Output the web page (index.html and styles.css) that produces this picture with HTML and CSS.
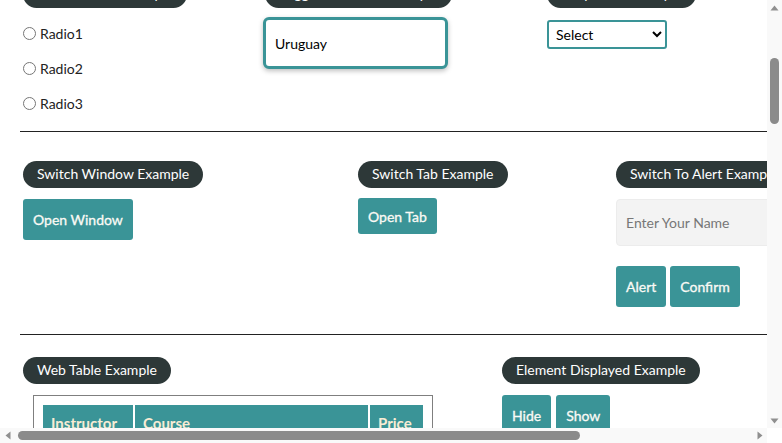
FILE: index.html
```html
<!DOCTYPE html>
<html>
<head>
    <meta charset="utf-8">
    <meta name="viewport" content="width=device-width, initial-scale=1">
    <title>Practice Page</title>
    <link rel="stylesheet" href="styles.css">
</head>
<body>
<div class="window">
    <div class="viewport">
        <div class="page">
            <header class="page-head">
                <h1>Practice Page</h1>
            </header>

            <div class="row row-one">
                <div class="block">
                    <h4 class="legend">Radio Button Example</h4>
                    <div class="radios">
                        <label class="radio"><input type="radio" name="radioButton" value="radio1">Radio1</label>
                        <label class="radio"><input type="radio" name="radioButton" value="radio2">Radio2</label>
                        <label class="radio"><input type="radio" name="radioButton" value="radio3">Radio3</label>
                    </div>
                </div>
                <div class="block">
                    <h4 class="legend legend-shift">Suggession Class Example</h4>
                    <input class="suggest" type="text" value="Uruguay">
                </div>
                <div class="block">
                    <h4 class="legend">Dropdown Example</h4>
                    <select class="dropdown">
                        <option>Select</option>
                        <option>Option1</option>
                        <option>Option2</option>
                        <option>Option3</option>
                    </select>
                </div>
                <div class="block">
                    <h4 class="legend">Checkbox Example</h4>
                    <div class="radios">
                        <label class="radio"><input type="checkbox">Option1</label>
                        <label class="radio"><input type="checkbox">Option2</label>
                        <label class="radio"><input type="checkbox">Option3</label>
                    </div>
                </div>
            </div>

            <hr class="divider">

            <div class="row row-two">
                <div class="block">
                    <h4 class="legend">Switch Window Example</h4>
                    <button class="btn btn-tall">Open Window</button>
                </div>
                <div class="block">
                    <h4 class="legend">Switch Tab Example</h4>
                    <a class="btn btn-link">Open Tab</a>
                </div>
                <div class="block">
                    <h4 class="legend">Switch To Alert Example</h4>
                    <input class="name-input" type="text" placeholder="Enter Your Name">
                    <div class="btn-row">
                        <button class="btn btn-tall">Alert</button>
                        <button class="btn btn-tall">Confirm</button>
                    </div>
                </div>
            </div>

            <hr class="divider">

            <div class="row row-three">
                <div class="block">
                    <h4 class="legend">Web Table Example</h4>
                    <div class="table-frame">
                        <table class="courses">
                            <thead>
                                <tr>
                                    <th class="col-inst">Instructor</th>
                                    <th>Course</th>
                                    <th class="col-price">Price</th>
                                </tr>
                            </thead>
                            <tbody>
                                <tr><td>Rahul Shetty</td><td>Selenium Webdriver with Java Basics + Advanced + Interview Guide</td><td>30</td></tr>
                                <tr><td>Rahul Shetty</td><td>Learn SQL in Practical + Database Testing from Scratch</td><td>25</td></tr>
                                <tr><td>Rahul Shetty</td><td>Appium (Selenium) - Mobile Automation Testing from Scratch</td><td>30</td></tr>
                                <tr><td>Rahul Shetty</td><td>WebSecurity Testing for Beginners-QA knowledge to next level</td><td>20</td></tr>
                                <tr><td>Rahul Shetty</td><td>Learn JMETER from Scratch - (Performance + Load) Testing Tool</td><td>25</td></tr>
                                <tr><td>Rahul Shetty</td><td>WebServices / REST API Testing with SoapUI</td><td>35</td></tr>
                                <tr><td>Rahul Shetty</td><td>QA Expert Course :Software Testing + Bugzilla + SQL + Agile</td><td>25</td></tr>
                                <tr><td>Rahul Shetty</td><td>Master Selenium Automation in simple Python Language</td><td>25</td></tr>
                                <tr><td>Rahul Shetty</td><td>Advanced Selenium Framework Pageobject, TestNG, Maven, Cucumber</td><td>20</td></tr>
                                <tr><td>Rahul Shetty</td><td>Write effective QA Resume that will turn to interview call</td><td>0</td></tr>
                            </tbody>
                        </table>
                    </div>
                </div>
                <div class="block">
                    <h4 class="legend">Element Displayed Example</h4>
                    <div class="btn-row btn-row-top">
                        <button class="btn btn-tall">Hide</button>
                        <button class="btn btn-tall">Show</button>
                    </div>
                    <input class="name-input shown-input" type="text" placeholder="Hide/Show Example">
                </div>
            </div>
        </div>
    </div>

    <!-- scrollbars -->
    <div class="vbar">
        <span class="arrow"><svg width="9" height="6" viewBox="0 0 9 6"><polygon points="4.5,0.5 8.5,5.5 0.5,5.5" fill="#8f8f8f"/></svg></span>
        <div class="vtrack"><div class="vthumb"></div></div>
        <span class="arrow"><svg width="9" height="6" viewBox="0 0 9 6"><polygon points="0.5,0.5 8.5,0.5 4.5,5.5" fill="#8f8f8f"/></svg></span>
    </div>
    <div class="hbar">
        <span class="arrow"><svg width="6" height="9" viewBox="0 0 6 9"><polygon points="0.5,4.5 5.5,0.5 5.5,8.5" fill="#8f8f8f"/></svg></span>
        <div class="htrack"><div class="hthumb"></div></div>
        <span class="arrow"><svg width="6" height="9" viewBox="0 0 6 9"><polygon points="0.5,0.5 5.5,4.5 0.5,8.5" fill="#8f8f8f"/></svg></span>
    </div>
    <div class="corner"></div>
</div>
<script src="script.js"></script>
</body>
</html>
```

FILE: styles.css
```css
html, body { height: 100%; overflow: hidden; }
body { margin: 0; font-family: Lato, "Liberation Sans", sans-serif; font-size: 14px; color: #222; background: #fff; }

.window { display: grid; grid-template-columns: 1fr 15px; grid-template-rows: 1fr 15px; height: 100vh; }
.viewport { overflow: hidden; }

.vbar { display: flex; flex-direction: column; background-color: #f9f9f9; }
.hbar { display: flex; background-color: #f9f9f9; }
.corner { background-color: #fff; }
.arrow { display: flex; align-items: center; justify-content: center; width: 15px; height: 15px; flex: none; }
.vtrack { flex: 1; }
.htrack { flex: 1; }
.vthumb { width: 9px; height: 66px; margin: 43px 3px 0; border-radius: 5px; background-color: #8b8b8b; }
.hthumb { height: 9px; width: 562px; margin: 3px 0 0 3px; border-radius: 5px; background-color: #8b8b8b; }

.page { width: 1003px; min-height: 2580px; padding-left: 20px; box-sizing: border-box; }
.page-head { height: 261px; display: flex; align-items: center; justify-content: center; }
.page-head h1 { margin: 0; font-size: 32px; color: #2c3e50; }

.row { display: grid; padding-left: 3px; }
.row-one { grid-template-columns: 240px 284px 253px 1fr; padding-bottom: 18px; }
.row-two { grid-template-columns: 335px 258px 1fr; padding-top: 29px; padding-bottom: 27px; }
.row-three { grid-template-columns: 479px 1fr; padding-top: 22px; }

.divider { margin: 0; border: 0; border-top: 1px solid #222; }

.block { display: flex; flex-direction: column; align-items: flex-start; }
.legend { margin: 0; height: 27px; line-height: 26px; padding: 0 14px; border-radius: 14px; background-color: #2d3838; color: #fff; font-size: 14px; font-weight: normal; white-space: nowrap; }
.legend-shift { margin-left: 2px; }

.radios { display: flex; flex-direction: column; gap: 15px; margin-top: 15px; }
.radio { display: flex; align-items: center; height: 20px; font-size: 14px; }
.radio input { margin: 0 4px 0 0; width: 13px; height: 13px; }

.suggest { margin-top: 9px; width: 185px; height: 52px; box-sizing: border-box; border: 3px solid #3a9497; border-radius: 6px; padding: 0 9px; font-family: inherit; font-size: 14px; color: #000; box-shadow: 0 2px 5px rgba(0,0,0,0.25); outline: none; }
.dropdown { margin-top: 12px; width: 120px; height: 29px; border: 2px solid #3a9497; border-radius: 3px; background: #fff; font-family: inherit; font-size: 14px; color: #000; padding-left: 3px; }

.btn { display: inline-flex; align-items: center; border: 0; border-radius: 3px; background-color: #3a9497; color: #fbfaf5; font-family: inherit; font-size: 14px; font-weight: normal; -webkit-text-stroke: 0.3px currentColor; padding: 0 10px; margin: 0; text-decoration: none; }
.btn-tall { height: 41px; margin-top: 11px; }
.btn-link { height: 36px; margin-top: 10px; }

.name-input { margin-top: 11px; width: 250px; height: 47px; box-sizing: border-box; background-color: #f3f3f3; border: 1px solid #ececec; border-radius: 4px; padding: 0 9px; font-family: inherit; font-size: 14px; }
.name-input::placeholder { color: #777; }
.btn-row { display: flex; gap: 4px; margin-top: 9px; }
.btn-row .btn { margin-top: 11px; }
.btn-row-top { margin-top: 0; gap: 5px; }
.shown-input { margin-top: 20px; }

.table-frame { margin: 11px 0 0 10px; width: 400px; box-sizing: border-box; border: 1px solid #7f7f7f; padding: 7px; }
.courses { width: 100%; border-spacing: 2px; }
.courses th { background-color: #3a9497; color: #f8ecd4; font-size: 15px; font-weight: bold; text-align: left; padding: 0 8px; height: 36px; }
.courses td { padding: 6px 8px; font-size: 14px; border-bottom: 1px solid #ddd; }
.col-inst { width: 74px; }
.col-price { width: 37px; }
```

FILE: script.js
```js
document.querySelector('.viewport').scrollTop = 280;
```
